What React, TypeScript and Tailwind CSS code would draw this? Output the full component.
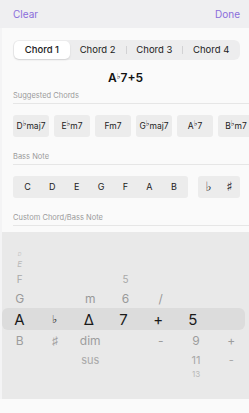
const purple = "text-[#8a6ddb]";

function Flat({ root, rest }: { root: string; rest: string }) {
  return (
    <span>
      {root}
      <sup className="text-[8px] -top-[3px]" style={{ fontFamily: "'DejaVu Sans', sans-serif" }}>♭</sup>
      {rest}
    </span>
  );
}

const chords = [
  { root: "D", flat: true, rest: "maj7" },
  { root: "E", flat: true, rest: "m7" },
  { root: "Fm7", flat: false, rest: "" },
  { root: "G", flat: true, rest: "maj7" },
  { root: "A", flat: true, rest: "7" },
  { root: "B", flat: true, rest: "m7" },
];

const notes = ["C", "D", "E", "G", "F", "A", "B"];

function Section({ label }: { label: string }) {
  return (
    <div className="ml-[11px] border-b border-[#e6e6e6] h-[16px] flex items-center">
      <span className="text-[7.5px] text-[#9a9a9a]">{label}</span>
    </div>
  );
}

function WheelRow({ cells, h, cls }: { cells: string[]; h: string; cls: string }) {
  return (
    <div className={`grid grid-cols-7 items-center ${h} ${cls}`}>
      {cells.map((c, i) => (
        <span key={i} className="text-center leading-none">
          {c}
        </span>
      ))}
    </div>
  );
}

export default function App() {
  return (
    <div className="w-[249px] h-[413px] bg-[#f4f4f5] overflow-hidden" style={{ fontFamily: "Inter, 'Liberation Sans', sans-serif" }}>
      <div className="h-[28px] bg-[#efeff1] flex items-center justify-between pl-[13px] pr-[9px] text-[10px]">
        <span className={purple}>Clear</span>
        <span className={purple}>Done</span>
      </div>

      <div className="ml-[2px] h-[204px] bg-[#fafafa] pt-[12px]">
        <div className="ml-[11px] mr-[9px] h-[20px] rounded-[6px] bg-[#ededee] p-[1px] flex items-center text-[9.5px] text-[#222]">
          <div className="flex-1 h-full bg-white rounded-[5px] shadow-[0_1px_2px_rgba(0,0,0,0.12)] flex items-center justify-center font-medium">
            Chord 1
          </div>
          <div className="flex-1 flex items-center justify-center">Chord 2</div>
          <div className="w-px h-[8px] bg-[#d2d2d4]" />
          <div className="flex-1 flex items-center justify-center">Chord 3</div>
          <div className="w-px h-[8px] bg-[#d2d2d4]" />
          <div className="flex-1 flex items-center justify-center">Chord 4</div>
        </div>

        <div className="h-[28px] flex items-center justify-center text-[12px] font-semibold text-[#111] pt-[8px]">
          <Flat root="A" rest="7+5" />
        </div>

        <Section label="Suggested Chords" />

        <div className="flex gap-[5px] ml-[11px] mt-[11px] h-[22px] overflow-hidden text-[8.5px] text-[#222]">
          {chords.map((c, i) => (
            <div key={i} className="w-[36px] shrink-0 rounded-[3px] bg-[#ececec] flex items-center justify-center">
              {c.flat ? <Flat root={c.root} rest={c.rest} /> : c.root}
            </div>
          ))}
        </div>

        <div className="mt-[12px]">
          <Section label="Bass Note" />
        </div>

        <div className="flex gap-[10px] ml-[11px] mt-[11px] h-[22px] text-[9px] text-[#222]">
          <div className="w-[175px] rounded-[3px] bg-[#ececec] flex items-center justify-around px-[2px]">
            {notes.map((n) => (
              <span key={n}>{n}</span>
            ))}
          </div>
          <div className="w-[42px] rounded-[3px] bg-[#ececec] flex items-center justify-around text-[13px]" style={{ fontFamily: "'DejaVu Sans', sans-serif" }}>
            <span>♭</span>
            <span>♯</span>
          </div>
        </div>

        <div className="mt-[12px]">
          <Section label="Custom Chord/Bass Note" />
        </div>
      </div>

      <div className="ml-[2px] h-[167px] bg-[#e9e9e9] pt-[17px]">
        <WheelRow cells={["D", "", "", "", "", "", ""]} h="h-[10px]" cls="text-[5px] text-[#c4c4c4] italic" />
        <WheelRow cells={["E", "", "", "", "", "", ""]} h="h-[10px]" cls="text-[8px] text-[#b8b8b8] italic" />
        <WheelRow cells={["F", "", "", "5", "", "", ""]} h="h-[20px]" cls="text-[10px] text-[#a8a8a8]" />
        <WheelRow cells={["G", "", "m", "6", "/", "", ""]} h="h-[19px]" cls="text-[12px] text-[#999]" />
        <div className="mr-[4px] rounded-[6px] bg-[#dcdcdc]">
          <div className="grid grid-cols-7 items-center h-[22px] text-[15px] text-[#1a1a1a]">
            <span className="text-center leading-none">A</span>
            <span className="text-center leading-none text-[11px]">♭</span>
            <span className="text-center leading-none">Δ</span>
            <span className="text-center leading-none">7</span>
            <span className="text-center leading-none">+</span>
            <span className="text-center leading-none">5</span>
            <span />
          </div>
        </div>
        <WheelRow cells={["B", "♯", "dim", "", "-", "9", "+"]} h="h-[21px]" cls="text-[12px] text-[#9d9d9d]" />
        <WheelRow cells={["", "", "sus", "", "", "11", "-"]} h="h-[18px]" cls="text-[11px] text-[#a8a8a8]" />
        <WheelRow cells={["", "", "", "", "", "13", ""]} h="h-[10px]" cls="text-[8px] text-[#b8b8b8]" />
      </div>

      <div className="h-[14px] bg-[#fafafa]" />
    </div>
  );
}
